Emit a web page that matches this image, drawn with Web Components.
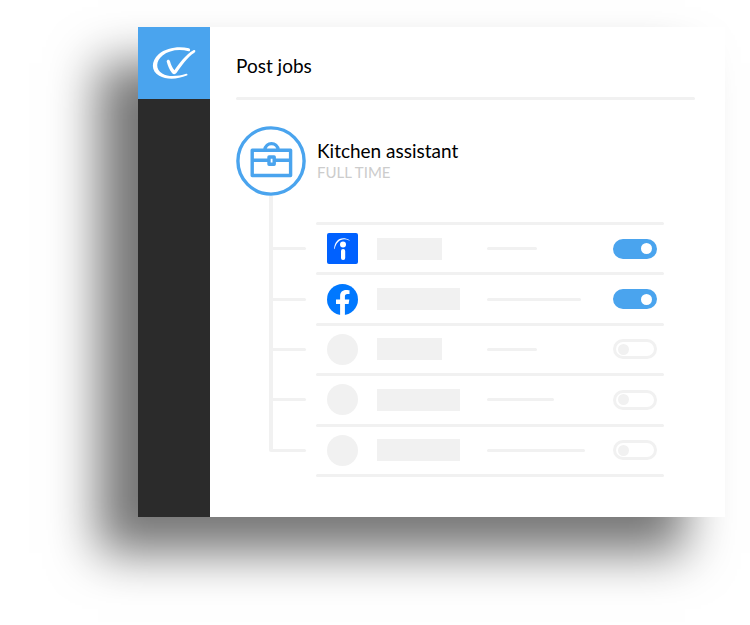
<!DOCTYPE html>
<html lang="en">
<head>
<meta charset="utf-8">
<meta name="viewport" content="width=device-width, initial-scale=1">
<title>Post jobs</title>
<style>
  :root {
    --blue: #4aa4ee;
    --dark: #2b2b2b;
    --line: #f1f1f1;
    --muted: #cccccc;
  }

  body {
    margin: 0;
    padding: 27px 25px 108px 138px;
    background: #fff;
    color: #000;
    font-family: Lato, "Liberation Sans", sans-serif;
    overflow-x: hidden;
  }
</style>
</head>
<body>

<app-window>
  <brand-logo slot="rail"></brand-logo>
  <span slot="title">Post jobs</span>
  <job-summary>
    Kitchen assistant
    <span slot="type">FULL TIME</span>
  </job-summary>
  <channel-list>
    <channel-row icon="indeed" name-size="short" detail="50" label="Indeed" checked></channel-row>
    <channel-row icon="facebook" detail="94" label="Facebook" checked></channel-row>
    <channel-row name-size="short" detail="50" label="Channel 3"></channel-row>
    <channel-row detail="67" label="Channel 4"></channel-row>
    <channel-row detail="98" label="Channel 5"></channel-row>
  </channel-list>
</app-window>

<script>
class AppWindow extends HTMLElement {
  connectedCallback() {
    this.attachShadow({ mode: 'open' });
    this.shadowRoot.innerHTML = `
      <style>
        :host {
          display: grid;
          grid-template-columns: 72px 1fr;
          background: #fff;
          box-shadow: -40px 36px 46px rgba(0, 0, 0, .54);
        }

        nav {
          background: var(--dark);
        }

        main {
          padding: 0 30px 40px 26px;
        }

        h1 {
          margin: 0;
          padding: 27px 0 19px;
          font-size: 19px;
          line-height: 24px;
          font-weight: 400;
        }

        hr {
          height: 3px;
          margin: 0 0 26px;
          border: 0;
          border-radius: 2px;
          background: var(--line);
        }
      </style>

      <nav><slot name="rail"></slot></nav>
      <main>
        <h1><slot name="title"></slot></h1>
        <hr>
        <slot></slot>
      </main>
    `;
  }
}

class BrandLogo extends HTMLElement {
  connectedCallback() {
    this.attachShadow({ mode: 'open' });
    this.shadowRoot.innerHTML = `
      <style>
        :host {
          display: block;
          background: var(--blue);
        }

        svg {
          display: block;
          width: 100%;
        }
      </style>

      <svg viewBox="0 0 72 72" fill="#fff" aria-hidden="true">
        <path d="M50.6 24.2C41 21.6 31 23.3 24.6 28.4C17.6 34 17.4 42.3 24.2 46.4C30.5 50.2 40 49.3 48.2 46.7C49.6 46.4 50 48 48.8 48.6C39.5 52.4 28.5 53 21.2 48.8C13 44 12.8 34.2 20.6 27.2C28.6 20.2 41.5 18.9 50.8 21.2C52.8 21.8 52.4 24.6 50.6 24.2Z"/>
        <path d="M29.2 33.2C30.4 32.3 31.6 32.9 32 34.3C32.9 37.6 34.3 40.7 36.4 43.2C41.5 36.4 47.5 27.4 55.4 23.2C57.4 22.4 58.2 24.6 56.4 25.7C49.2 30.2 43.8 38.6 38.6 45.7C37.2 47.6 35.4 47.6 34 45.9C31.4 42.6 29.9 38.7 28.9 35.2C28.6 34.3 28.6 33.7 29.2 33.2Z"/>
      </svg>
    `;
  }
}

class JobSummary extends HTMLElement {
  connectedCallback() {
    this.attachShadow({ mode: 'open' });
    this.shadowRoot.innerHTML = `
      <style>
        :host {
          display: flex;
          gap: 11px;
        }

        svg {
          flex: none;
          width: 70px;
          height: 70px;
        }

        h2, p {
          margin: 0;
          font-weight: 400;
        }

        h2 {
          padding-top: 13px;
          font-size: 19px;
          line-height: 24px;
        }

        p {
          color: var(--muted);
          font-size: 15px;
          line-height: 18px;
        }
      </style>

      <svg viewBox="0 0 70 70" fill="none" stroke="#4aa4ee" stroke-width="3.4" stroke-linejoin="round" aria-hidden="true">
        <circle cx="35" cy="35" r="33.1"/>
        <rect x="16.2" y="24.3" width="38.4" height="25.2"/>
        <path d="M28.8 24C29.6 15.5 41.4 15.5 42.2 24M16 34.2H32M39 34.2H55"/>
        <rect x="33" y="31" width="5.2" height="7.2"/>
      </svg>
      <div>
        <h2><slot></slot></h2>
        <p><slot name="type"></slot></p>
      </div>
    `;
  }
}

class ChannelList extends HTMLElement {
  connectedCallback() {
    this.attachShadow({ mode: 'open' });
    this.shadowRoot.innerHTML = `
      <style>
        :host {
          display: block;
          padding-right: 31px;
        }

        .start {
          display: grid;
          grid-template-columns: 4px 1fr;
          align-items: end;
          gap: 43px;
          height: 29px;
          padding-left: 33px;
        }

        .trunk {
          height: 100%;
          background: var(--line);
        }

        .line {
          height: 3px;
          border-radius: 2px;
          background: var(--line);
        }

        .rows {
          display: grid;
          grid-auto-rows: 1fr;
          min-height: 252px;
        }
      </style>

      <div class="start"><div class="trunk"></div><div class="line"></div></div>
      <div class="rows"><slot></slot></div>
    `;
  }
}

const icons = {
  indeed: `
    <rect width="31" height="31" rx="2" fill="#0061ff"/>
    <circle cx="16" cy="11.6" r="3" fill="#fff"/>
    <rect x="14" y="16" width="4.2" height="11" rx="2" fill="#fff"/>
    <path d="M7.2 16C7 8 14 1.8 22.6 7.2C22.8 7.6 22.6 7.8 22.2 7.6C15 4 9.2 8.4 7.8 15.8C7.6 16.2 7.2 16.2 7.2 16Z" fill="#fff"/>`,
  facebook: `
    <circle cx="15.5" cy="15.5" r="15.5" fill="#0078ff"/>
    <path d="M13.1 31V20H9V15.6H13.1V12.2C13.1 8 15.5 5.9 19.2 5.9C20.7 5.9 22.5 6.2 22.5 6.2V10H20.4C18.5 10 17.9 11.2 17.9 12.5V15.6H22.3L21.6 20H17.9V31Z" fill="#fff"/>`,
  empty: '<circle cx="15.5" cy="15.5" r="15.5" fill="#f1f1f1"/>'
};

class ChannelRow extends HTMLElement {
  connectedCallback() {
    const icon = icons[this.getAttribute('icon') || 'empty'];
    const detail = this.getAttribute('detail');
    const label = this.getAttribute('label');

    this.attachShadow({ mode: 'open' });
    this.shadowRoot.innerHTML = `
      <style>
        :host {
          display: grid;
          grid-template-columns: 37px 1fr;
          grid-template-rows: 1fr 3px;
          column-gap: 10px;
          padding-left: 33px;
        }

        .branch {
          grid-row: 1 / 3;
          display: grid;
          grid-template-columns: 4px 1fr;
          grid-template-rows: 1fr 3px 1fr 3px;
        }

        .trunk {
          grid-area: 1 / 1 / 5 / 2;
          background: var(--line);
        }

        :host(:last-child) .trunk {
          grid-row-end: 3;
          border-bottom-left-radius: 2px;
        }

        .twig {
          grid-area: 2 / 2;
          border-radius: 0 2px 2px 0;
          background: var(--line);
        }

        .content {
          display: grid;
          grid-template-columns: 31px 91px 1fr auto;
          align-items: center;
          column-gap: 19px;
          padding: 0 7px 0 11px;
        }

        svg {
          width: 31px;
          height: 31px;
        }

        .name {
          width: 83px;
          height: 22px;
          background: var(--line);
        }

        :host([name-size="short"]) .name {
          width: 65px;
        }

        .detail {
          height: 3px;
          border-radius: 2px;
          background: var(--line);
        }

        .rule {
          grid-column: 2;
          border-radius: 2px;
          background: var(--line);
        }
      </style>

      <div class="branch"><div class="trunk"></div><div class="twig"></div></div>
      <div class="content">
        <svg viewBox="0 0 31 31" aria-hidden="true">${icon}</svg>
        <div class="name"></div>
        <div class="detail" style="width: ${detail}px"></div>
        <toggle-switch label="${label}" ${this.hasAttribute('checked') ? 'checked' : ''}></toggle-switch>
      </div>
      <div class="rule"></div>
    `;
  }
}

class ToggleSwitch extends HTMLElement {
  connectedCallback() {
    this.attachShadow({ mode: 'open' });
    this.shadowRoot.innerHTML = `
      <style>
        :host {
          display: block;
        }

        input {
          appearance: none;
          display: flex;
          align-items: center;
          box-sizing: border-box;
          width: 44px;
          height: 20px;
          margin: 0;
          padding: 0 2px;
          border: 3px solid var(--line);
          border-radius: 10px;
          background: #fff;
          cursor: pointer;
        }

        input::before {
          content: "";
          width: 11px;
          height: 11px;
          border-radius: 50%;
          background: var(--line);
        }

        input:checked {
          justify-content: flex-end;
          border-color: var(--blue);
          background: var(--blue);
        }

        input:checked::before {
          background: #fff;
        }
      </style>

      <input type="checkbox" role="switch" aria-label="${this.getAttribute('label')}">
    `;

    this.shadowRoot.querySelector('input').checked = this.hasAttribute('checked');
  }
}

customElements.define('app-window', AppWindow);
customElements.define('brand-logo', BrandLogo);
customElements.define('job-summary', JobSummary);
customElements.define('channel-list', ChannelList);
customElements.define('channel-row', ChannelRow);
customElements.define('toggle-switch', ToggleSwitch);
</script>
</body>
</html>
